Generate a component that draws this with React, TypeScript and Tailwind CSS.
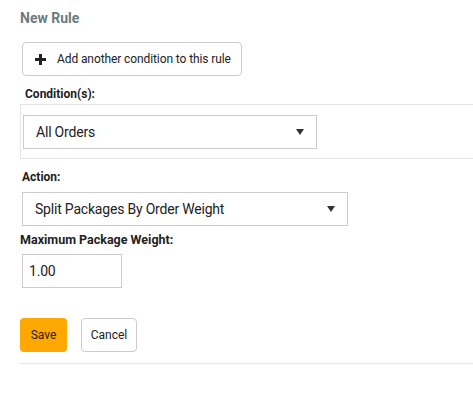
import React from 'react';

const font = { fontFamily: '"Roboto", "Liberation Sans", sans-serif' };

// Select box with a small down caret on the right
const SelectBox: React.FC<{ value: string; className: string }> = ({ value, className }) => (
  <div className={`h-[34px] border border-[#cccccc] bg-white flex items-center justify-between pl-[12px] pr-[12px] ${className}`}>
    <span className="text-[14px] text-[#222] tracking-[-0.2px]">{value}</span>
    <svg width="8" height="6" viewBox="0 0 8 6">
      <path d="M0 0 H8 L4 6 Z" fill="#333" />
    </svg>
  </div>
);

export default function App() {
  return (
    <div className="w-[473px] h-[397px] bg-white overflow-hidden pl-[20px]" style={font}>
      <div className="pt-[9px] text-[14px] leading-[18px] font-bold text-[#6c7a80]">New Rule</div>

      <button className="mt-[15px] ml-[2px] h-[34px] w-[220px] border border-[#cccccc] rounded-[4px] flex items-center pl-[12px] gap-[11px] bg-white">
        <svg width="11" height="11" viewBox="0 0 11 11">
          <path d="M4 0h3v4h4v3H7v4H4V7H0V4h4z" fill="#222" />
        </svg>
        <span className="text-[12px] text-[#222] tracking-[-0.1px]">Add another condition to this rule</span>
      </button>

      <div className="mt-[10px] ml-[5px] text-[12px] leading-[16px] font-bold text-[#222]">Condition(s):</div>

      <div className="mt-[2px] h-[55px] border border-r-0 border-[#e6e6e6] pt-[10px] pl-[2px]">
        <SelectBox value="All Orders" className="w-[294px]" />
      </div>

      <div className="mt-[10px] ml-[2px] text-[12px] leading-[16px] font-bold text-[#222]">Action:</div>

      <SelectBox value="Split Packages By Order Weight" className="mt-[7px] ml-[2px] w-[326px]" />

      <div className="mt-[6px] text-[12.5px] leading-[16px] font-bold text-[#222]">Maximum Package Weight:</div>

      <div className="mt-[6px] ml-[2px] w-[100px] h-[34px] border border-[#cccccc] flex items-center pl-[6px]">
        <span className="text-[14px] text-[#222] tracking-[-0.2px]">1.00</span>
      </div>

      <div className="mt-[30px] flex gap-[14px]">
        <button className="h-[34px] w-[47px] rounded-[4px] bg-[#ffa800] text-[12px] text-[#222]">Save</button>
        <button className="h-[34px] w-[56px] rounded-[4px] border border-[#cccccc] bg-white text-[12px] text-[#222]">Cancel</button>
      </div>

      <div className="mt-[11px] border-t border-[#e6e6e6]" />
    </div>
  );
}
